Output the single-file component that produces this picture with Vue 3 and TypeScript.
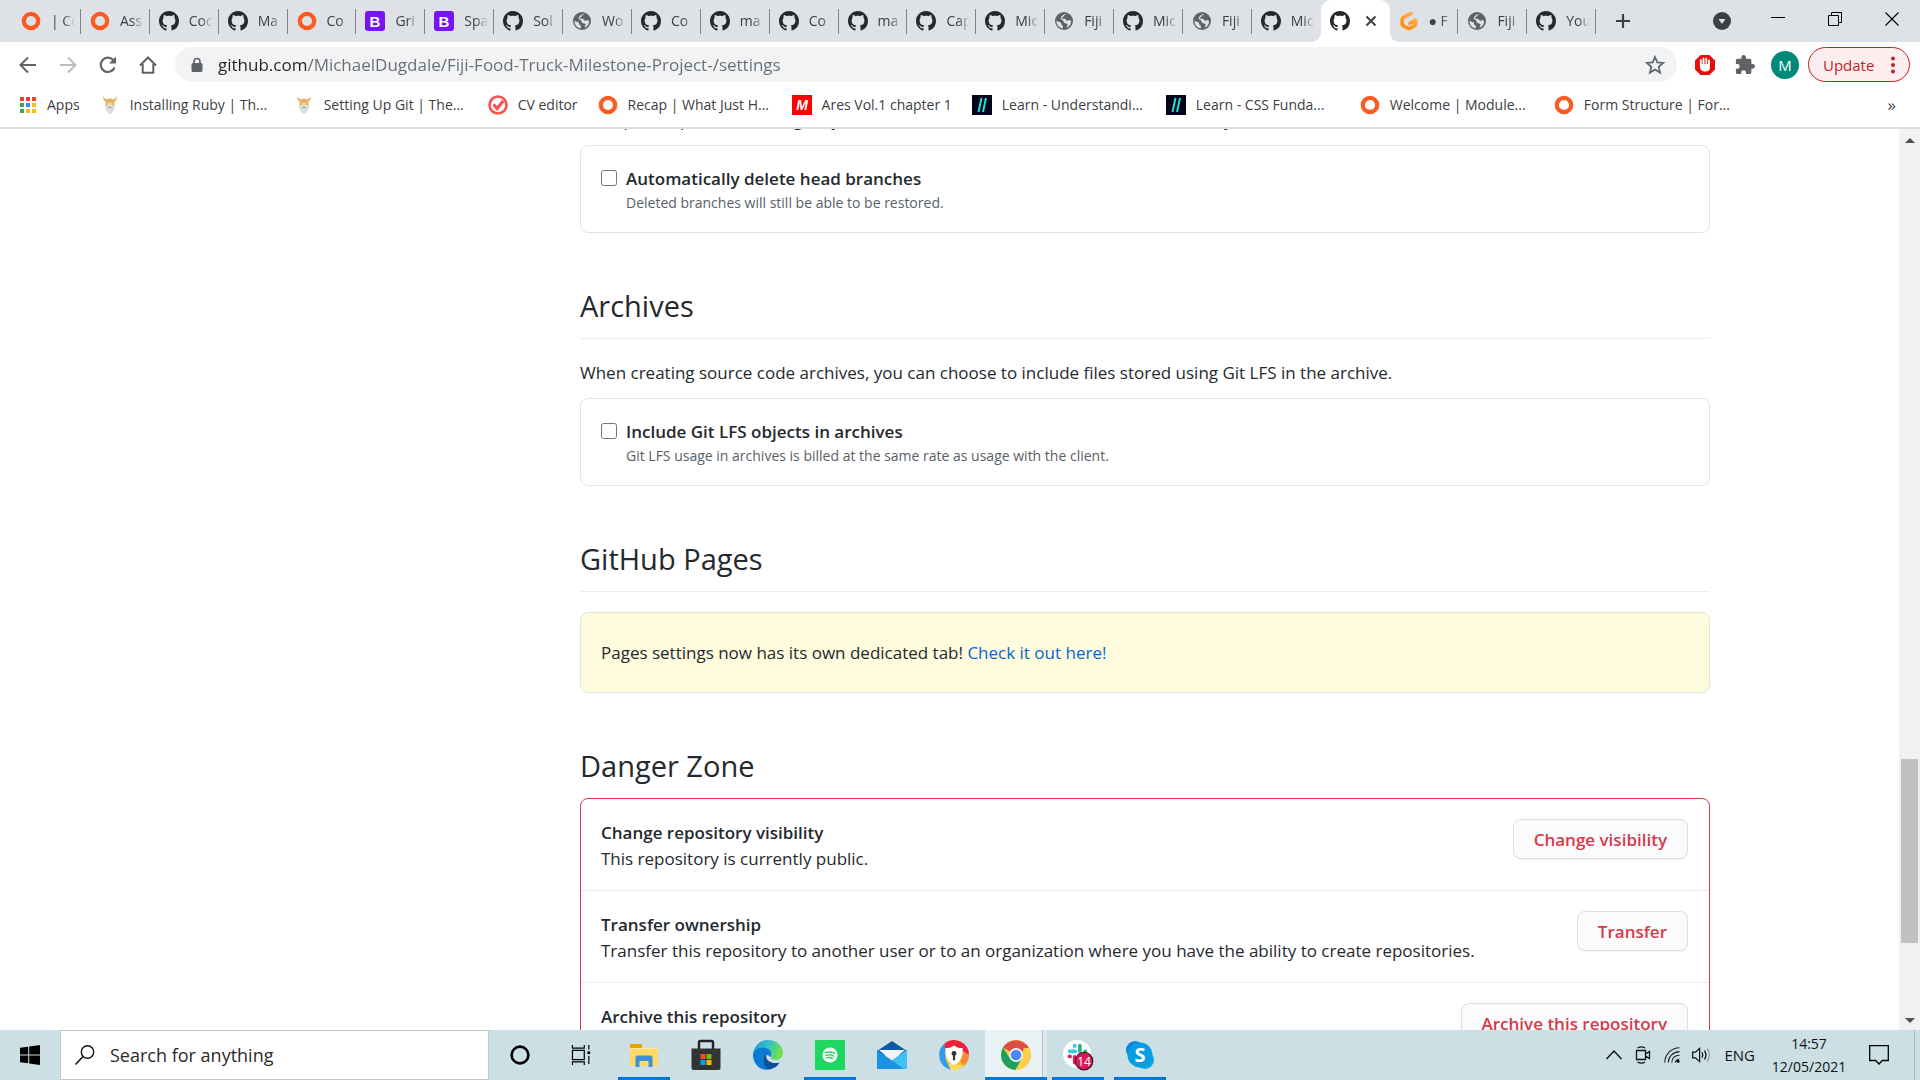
<script setup lang="ts">
interface Glyph { box: string; body: string }
interface Tab { icon: string; title: string; active?: boolean; divider: boolean }
interface Bookmark { icon: string; label: string; cut?: boolean }
interface TaskApp { icon: string; name: string; state?: 'open' | 'active' }
interface DangerItem { title: string; text: string; action: string }

const octocat = 'M8 0C3.58 0 0 3.58 0 8c0 3.54 2.29 6.53 5.47 7.59.4.07.55-.17.55-.38 0-.19-.01-.82-.01-1.49-2.01.37-2.53-.49-2.69-.94-.09-.23-.48-.94-.82-1.13-.28-.15-.68-.52-.01-.53.63-.01 1.08.58 1.23.82.72 1.21 1.87.87 2.33.66.07-.52.28-.87.51-1.07-1.78-.2-3.64-.89-3.64-3.95 0-.87.31-1.59.82-2.15-.08-.2-.36-1.02.08-2.12 0 0 .67-.21 2.2.82.64-.18 1.32-.27 2-.27.68 0 1.36.09 2 .27 1.53-1.04 2.2-.82 2.2-.82.44 1.1.16 1.92.08 2.12.51.56.82 1.27.82 2.15 0 3.07-1.87 3.75-3.65 3.95.29.25.54.73.54 1.48 0 1.07-.01 1.93-.01 2.2 0 .21.15.46.55.38A8.013 8.013 0 0016 8c0-4.42-3.58-8-8-8z'

const glyphs: Record<string, Glyph> = {
  ring: { box: '0 0 20 20', body: '<circle cx="10" cy="10" r="7.2" fill="none" stroke="#fb5a20" stroke-width="4.2"/>' },
  github: { box: '0 0 16 16', body: `<path fill="#24292e" d="${octocat}"/>` },
  bootstrap: { box: '0 0 20 20', body: '<rect width="20" height="20" rx="3" fill="#7613f7"/><text x="10" y="15.5" text-anchor="middle" font-family="Liberation Sans, sans-serif" font-weight="700" font-size="15" fill="#fff">B</text>' },
  globe: { box: '0 0 20 20', body: '<circle cx="10" cy="10" r="9" fill="#5f6368"/><path d="M2.6 9.5c1.2 1.6 3.1.9 4 2.1.8 1 .2 2.300 1.600 2.700 1 .4.6 1.700.8 2.900-4.200-.2-6.800-3.600-6.400-7.700zM12.300 2.900c-.5.9-2.300.8-2.400 2.100-.1 1.100-1.800.8-1.900 1.900 0 1 1.200 1 2.300.9 1.500-.1 1.300 1.600 2.600 1.800 1.400.2 1.600-.7 3-.4l1.200.8c.1 3.600-2 5.800-4.300 6.800-.2-1.300.9-2 .8-3.200-.2-1.400-2.600-.8-3.600-2.100-.8-1.200-.4-2.400-1.900-2.800-1.400-.3-1.700-1.500-1-2.700.8-1.700 3-3.200 5.200-3.100z" fill="#dee1e6"/>' },
  gitpod: { box: '0 0 20 20', body: '<defs><linearGradient id="gp" x1="0" y1="1" x2="1" y2="0"><stop offset="0" stop-color="#ff8a00"/><stop offset="1" stop-color="#ffb45b"/></linearGradient></defs><path d="M12.300 2.300 4.300 6.500a2 2 0 0 0-1.100 1.800v4.600a2 2 0 0 0 1.100 1.800l4.800 2.600a2 2 0 0 0 1.900 0l4.700-2.600a2 2 0 0 0 1.100-1.800V9.200l-6 3.300" fill="none" stroke="url(#gp)" stroke-width="3.600" stroke-linecap="round" stroke-linejoin="round"/>' },
  apps: { box: '0 0 18 18', body: '<path fill="#ea4335" d="M1 1h4v4H1zM7 1h4v4H7zM13 1h4v4h-4z"/><path fill="#34a853" d="M1 7h4v4H1zM1 13h4v4H1z"/><path fill="#4285f4" d="M7 7h4v4H7z"/><path fill="#fbbc05" d="M13 7h4v4h-4zM7 13h4v4H7zM13 13h4v4h-4z"/>' },
  viking: { box: '0 0 20 20', body: '<path d="M3 1c0 3 1 5 3 6h8c2-1 3-3 3-6-1 2-2 3-4 3.500C11.500 3 8.500 3 7 4.500 5 4 4 3 3 1z" fill="#e0b060"/><path d="M5.500 6h9v6h-9z" fill="#e6b765"/><path d="M8 8h4v3H8z" fill="#f6d7b0"/><path d="M5 9c1 2 3 1 5 1s4 1 5-1c.5 5-2 8-5 10.500C7 17 4.500 14 5 9z" fill="#dcdcdc"/><path d="M7.500 12.500c2-1 3-1 5 0-2 .8-3 .8-5 0z" fill="#a8a8a8"/>' },
  check: { box: '0 0 20 20', body: '<circle cx="10" cy="10" r="8.500" fill="none" stroke="#f9524f" stroke-width="2.600"/><path d="M5.500 9.500l3.700 4 6-7.500" fill="none" stroke="#f9524f" stroke-width="3.200"/>' },
  ares: { box: '0 0 20 20', body: '<path fill="#f00" d="M0 0h20v20H0z"/><text x="10" y="15" text-anchor="middle" font-family="Liberation Sans, sans-serif" font-style="italic" font-weight="700" font-size="14" fill="#fff">M</text>' },
  slashes: { box: '0 0 20 20', body: '<path fill="#04041a" d="M0 0h20v20H0z"/><path d="M6.500 17 9.500 3M11 17l3-14" stroke="#17e5d2" stroke-width="2"/>' },
  back: { box: '0 0 20 20', body: '<path d="M18 10H3M10 2.500 2.500 10l7.500 7.500" fill="none" stroke="#5f6368" stroke-width="2"/>' },
  forward: { box: '0 0 20 20', body: '<path d="M2 10h15M10 2.500 17.500 10 10 17.500" fill="none" stroke="#babcbe" stroke-width="2"/>' },
  reload: { box: '0 0 20 20', body: '<path d="M16.600 12.500A7.200 7.200 0 1 1 15.300 5" fill="none" stroke="#5f6368" stroke-width="2.100"/><path d="M18 1.500V8.500H11z" fill="#5f6368"/>' },
  home: { box: '0 0 20 20', body: '<path d="M2 10.500 10 2.500l8 8M4.700 9v8.700h10.600V9" fill="none" stroke="#5f6368" stroke-width="2"/>' },
  lock: { box: '0 0 14 16', body: '<rect x="1.500" y="6" width="11" height="9" rx="1.500" fill="#5f6368"/><path d="M4 7V4.500a3 3 0 0 1 6 0V7" fill="none" stroke="#5f6368" stroke-width="1.600"/>' },
  star: { box: '0 0 20 20', body: '<path d="m10 2 2.300 5.400 5.900.5-4.500 3.900 1.400 5.800L10 14.500l-5.100 3.100 1.400-5.800L1.800 7.900l5.900-.5z" fill="none" stroke="#5f6368" stroke-width="1.700"/>' },
  blocker: { box: '0 0 22 22', body: '<path d="M6.600 1h8.800L21 6.600v8.800L15.400 21H6.600L1 15.400V6.600z" fill="#ec0b0b"/><path d="M6.800 11.500V6.200M9.500 10.500V4.500M12.300 10.500V4.800M15 12V6.500" stroke="#fff" stroke-width="1.900" stroke-linecap="round"/><path d="M6 10h10v3.500c0 2.500-1.600 4-4.500 4S6 16 6 13.500z" fill="#fff"/>' },
  puzzle: { box: '1 1 22 22', body: '<path fill="#5f6368" d="M20.500 11H19V7c0-1.100-.9-2-2-2h-4V3.500a2.500 2.500 0 0 0-5 0V5H4c-1.100 0-2 .9-2 2v3.800h1.500a2.700 2.700 0 0 1 0 5.400H2V20c0 1.100.9 2 2 2h3.800v-1.500a2.700 2.700 0 0 1 5.400 0V22H17c1.100 0 2-.9 2-2v-4h1.500a2.500 2.500 0 0 0 0-5z"/>' },
  kebab: { box: '0 0 4 18', body: '<circle cx="2" cy="2.500" r="2" fill="#c5221f"/><circle cx="2" cy="9" r="2" fill="#c5221f"/><circle cx="2" cy="15.500" r="2" fill="#c5221f"/>' },
  close: { box: '0 0 12 12', body: '<path d="m1.500 1.500 9 9m0-9-9 9" stroke="#3c4043" stroke-width="2"/>' },
  plus: { box: '0 0 16 16', body: '<path d="M8 1v14M1 8h14" stroke="#3c4043" stroke-width="2.200"/>' },
  chevrondisc: { box: '0 0 18 18', body: '<circle cx="9" cy="9" r="9" fill="#3c4043"/><path d="M5.500 7h7L9 12z" fill="#dee1e6"/>' },
  minimise: { box: '0 0 14 14', body: '<path d="M0 5.500h14" stroke="#000"/>' },
  restore: { box: '0 0 14 14', body: '<path d="M.5 3.500h10v10H.5zM3.500 3.500v-3h10v10h-3" fill="none" stroke="#000"/>' },
  exit: { box: '0 0 14 14', body: '<path d="m.5.5 13 13m0-13-13 13" stroke="#000" stroke-width="1.100"/>' },
  windows: { box: '0 0 20 20', body: '<path d="M0 2.800 8.200 1.700v7.800H0zM9.200 1.500 20 0v9.500H9.200zM0 10.500h8.200v7.800L0 17.200zM9.200 10.500H20V20L9.200 18.500z"/>' },
  magnifier: { box: '0 0 20 20', body: '<circle cx="12.500" cy="7" r="6.200" fill="none" stroke="#111" stroke-width="1.400"/><path d="M8 11.500.5 19.500" stroke="#111" stroke-width="1.500"/>' },
  cortana: { box: '0 0 20 20', body: '<circle cx="10" cy="10" r="8.400" fill="none" stroke="#000" stroke-width="2.600"/>' },
  taskview: { box: '1 0 20 22', body: '<path d="M.5 0v3.500h13V0M.5 22v-3.500h13V22M.5 6h13v10H.5zM18.500 0v5M18.500 12v9" fill="none" stroke="#000" stroke-width="1.300"/><path d="M17 7h3v3h-3z"/>' },
  explorer: { box: '0 0 30 30', body: '<path d="M1 4.500h11.500l1.500 3H29V26H1z" fill="#ffd867"/><path d="M1 4h12v4H1z" fill="#e2a30a"/><path d="M1 8h28v1H1z" fill="#ffe9a3"/><path d="M6.500 27V17.500a2 2 0 0 1 2-2h13a2 2 0 0 1 2 2V27h-4v-6h-9v6z" fill="#3b91d8"/>' },
  store: { box: '0 0 30 30', body: '<path d="M8 10V2.500a1.500 1.500 0 0 1 1.500-1.500h11a1.500 1.500 0 0 1 1.500 1.500V10" fill="none" stroke="#222" stroke-width="2.400"/><path d="M.5 8.500h29V28a2 2 0 0 1-2 2h-25a2 2 0 0 1-2-2z" fill="#333"/><path d="M9.500 14h5v5h-5z" fill="#f25022"/><path d="M15.500 14h5v5h-5z" fill="#7fba00"/><path d="M9.500 20h5v5h-5z" fill="#00a4ef"/><path d="M15.500 20h5v5h-5z" fill="#ffb900"/>' },
  edge: { box: '0 0 30 30', body: '<defs><linearGradient id="eg" x1="0" x2="1" y2=".3"><stop offset="0" stop-color="#1b9de2"/><stop offset=".55" stop-color="#35c1c6"/><stop offset="1" stop-color="#6fe04b"/></linearGradient></defs><path d="M0 14C1 5.500 7.500 0 15 0c9 0 15 6 15 13 0 4.500-3.500 7-7.500 7-3.500 0-5-1.200-4.500-2.300 2-2.700.5-7.700-5-7.700C7 10 1.500 11 0 14z" fill="url(#eg)"/><path d="M0 14c1-3.500 5-7 10.500-6.500 4.500.3 8 3.500 8 6.500 0 1.500-.5 2.500-1 3.300C15 13.500 11 14.500 10.500 18c-.3 4 3 8.500 8 9.500-2 1.500-4.500 2.500-6 2.300C5 29-.5 22 0 14z" fill="#0a7bd3"/><path d="M10.500 18c.3-2 1.500-3.500 3-4.300-2 6 4.500 11 13 8.800-1.500 3-5 6.500-11 7-3-1.500-5.500-7-5-11.500z" fill="#0c4f9e"/>' },
  spotify: { box: '0 0 30 30', body: '<path fill="#1ed760" d="M0 0h30v30H0z"/><circle cx="15" cy="15" r="7.600" fill="#fff"/><path d="M10.500 12.500c3.500-1 6.500-.7 9.300.8M11 15.300c2.800-.8 5.500-.5 7.800.8M11.500 17.900c2.300-.6 4.400-.4 6.200.7" fill="none" stroke="#1ed760" stroke-width="1.400" stroke-linecap="round"/>' },
  mail: { box: '0 0 30 30', body: '<path d="M0 11 15 1l15 10v4H0z" fill="#0c59a4"/><path d="M2 10h26L15 21z" fill="#f4f4f6"/><path d="M0 10l15 10.500L30 10v19H0z" fill="#1b93e2"/><path d="M30 10 15 20.500 27 29h3z" fill="#3cc3f3"/>' },
  vault: { box: '0 0 28 28', body: '<circle cx="14" cy="14" r="14" fill="#f6c23b"/><path d="M5 3.500A14 14 0 0 1 28 14l-5-3L14 5 5 11z" fill="#ee1f44"/><path d="M5 3.500A14 14 0 0 0 11 27.700L6 18V10z" fill="#2b9df4"/><path d="M11 27.700A14 14 0 0 0 23 24l-9-1-5-1z" fill="#ffd95a"/><path d="M28 14a14 14 0 0 1-5 10l-3-4 3-9z" fill="#f58a3a"/><path d="M14 5.500c2.500 1.500 5 2 8 2C22.500 15 20 21 14 23.500 8 21 5.500 15 6 7.500c3 0 5.500-.5 8-2z" fill="#fff"/><circle cx="14" cy="12.500" r="2.300" fill="#333"/><path d="M13 13h2v6h-2z" fill="#333"/>' },
  chrome: { box: '0 0 28 28', body: '<circle cx="14" cy="14" r="14" fill="#fbc546"/><path d="M14 14 1.900 7A14 14 0 0 1 26.100 7.500z" fill="#dd4f43"/><path d="M1.900 7A14 14 0 0 0 13.500 28l6-11L14 14 7.500 16z" fill="#1ea15c"/><path d="M26.100 7.500A14 14 0 0 1 13.500 28L20 17l1-9.500z" fill="#fdcf4b"/><circle cx="14" cy="14" r="6.500" fill="#f4f4f4"/><circle cx="14" cy="14" r="5" fill="#4a8af4"/>' },
  slack: { box: '0 0 32 32', body: '<circle cx="15" cy="15" r="15" fill="#fff"/><g stroke-width="4" stroke-linecap="round"><path d="M7 12h6M12.500 6v.5" stroke="#36c5f0"/><path d="M18 6v6M23.500 12h.5" stroke="#2eb67d"/><path d="M12.500 18v6M7 17.500h.5" stroke="#e01e5a"/><path d="M18 18h6" stroke="#ecb22e"/></g><circle cx="22.500" cy="22.500" r="9.300" fill="#d81b57" stroke="#4a1022" stroke-width="1.200"/><text x="22.500" y="27.500" text-anchor="middle" font-family="Open Sans, sans-serif" font-size="13" fill="#fff">14</text>' },
  skype: { box: '0 0 30 30', body: '<circle cx="10" cy="10" r="9" fill="#0a86d4"/><circle cx="20" cy="20" r="9" fill="#0aa5ec"/><circle cx="15" cy="15" r="12.500" fill="#069ee3"/><text x="15" y="22" text-anchor="middle" font-family="Open Sans, sans-serif" font-weight="700" font-size="20" fill="#fff">S</text>' },
  caret: { box: '0 0 16 16', body: '<path d="m.5 12 7.500-8 7.500 8" fill="none" stroke="#111" stroke-width="1.400"/>' },
  meet: { box: '0 0 16 18', body: '<path d="M1.500 4.500h9v9h-9zM10.500 8l4-2.500v7l-4-2.500M2.500 2C5 .6 8 .6 10 2M2.500 16c2.500 1.400 5.500 1.400 7.500 0" fill="none" stroke="#111" stroke-width="1.300"/>' },
  wifi: { box: '0 0 16 16', body: '<path d="M.7 15.500C1 7.500 7 1 15.500.8M4.200 15.500C4.500 9.500 9 5 15.500 4.600M7.800 15.500c.3-4 3-7 7.700-7.200M11.300 15.500c.2-2 1.700-3.300 4.200-3.500" fill="none" stroke="#222" stroke-width="1.100"/><circle cx="14" cy="14.300" r="1.500"/>' },
  sound: { box: '0 0 21 18', body: '<path d="M.7 6h3L8 2v14l-4.300-4h-3zM10.500 6.300c1 1.600 1 3.800 0 5.400M13 4.300c2 2.800 2 6.600 0 9.400" fill="none" stroke="#111" stroke-width="1.300"/><path d="M16 2.300c3 4 3 9.400 0 13.400" fill="none" stroke="#7d8c91" stroke-width="1.200"/>' },
  note: { box: '0 0 20 20', body: '<path d="M.7.7h18.600v14.800h-6L10 19l-3.300-3.500h-6z" fill="none" stroke="#000" stroke-width="1.300"/>' },
}

const rawTabs: [string, string][] = [
  ['ring', '| Co'], ['ring', 'Ass'], ['github', 'Coc'], ['github', 'Ma'], ['ring', 'Co'],
  ['bootstrap', 'Gri'], ['bootstrap', 'Spa'], ['github', 'Sol'], ['globe', 'Wo'], ['github', 'Co'],
  ['github', 'ma'], ['github', 'Co'], ['github', 'ma'], ['github', 'Cap'], ['github', 'Mic'],
  ['globe', 'Fiji'], ['github', 'Mic'], ['globe', 'Fiji'], ['github', 'Mic'], ['github', ''],
  ['gitpod', '● F'], ['globe', 'Fiji'], ['github', 'You'],
]
const activeIndex = 19
const tabs: Tab[] = rawTabs.map(([icon, title], i) => ({
  icon, title, active: i === activeIndex, divider: i !== activeIndex && i !== activeIndex - 1,
}))

const bookmarks: Bookmark[] = [
  { icon: 'viking', label: 'Installing Ruby | Th...', cut: true },
  { icon: 'viking', label: 'Setting Up Git | The...', cut: true },
  { icon: 'check', label: 'CV editor' },
  { icon: 'ring', label: 'Recap | What Just H...', cut: true },
  { icon: 'ares', label: 'Ares Vol.1 chapter 1' },
  { icon: 'slashes', label: 'Learn - Understandi...', cut: true },
  { icon: 'slashes', label: 'Learn - CSS Funda...', cut: true },
  { icon: 'ring', label: 'Welcome | Module...', cut: true },
  { icon: 'ring', label: 'Form Structure | For...', cut: true },
]

const taskApps: TaskApp[] = [
  { icon: 'explorer', name: 'File Explorer', state: 'open' },
  { icon: 'store', name: 'Microsoft Store' },
  { icon: 'edge', name: 'Edge' },
  { icon: 'spotify', name: 'Spotify', state: 'open' },
  { icon: 'mail', name: 'Mail' },
  { icon: 'vault', name: 'Secure Browser' },
  { icon: 'chrome', name: 'Chrome', state: 'active' },
  { icon: 'slack', name: 'Slack', state: 'open' },
  { icon: 'skype', name: 'Skype', state: 'open' },
]

const dangerItems: DangerItem[] = [
  { title: 'Change repository visibility', text: 'This repository is currently public.', action: 'Change visibility' },
  { title: 'Transfer ownership', text: 'Transfer this repository to another user or to an organization where you have the ability to create repositories.', action: 'Transfer' },
  { title: 'Archive this repository', text: 'Mark this repository as archived and read-only.', action: 'Archive this repository' },
]
</script>

<template>
  <div class="desktop">
    <header class="tabstrip">
      <nav class="tabs" aria-label="Open tabs">
        <div v-for="(tab, i) in tabs" :key="i" class="tab" :class="{ active: tab.active, divider: tab.divider }">
          <svg class="i20" :viewBox="glyphs[tab.icon].box" v-html="glyphs[tab.icon].body"></svg>
          <button v-if="tab.active" class="plain" aria-label="Close tab">
            <svg class="i12" :viewBox="glyphs.close.box" v-html="glyphs.close.body"></svg>
          </button>
          <span v-else class="tab-title">{{ tab.title }}</span>
        </div>
      </nav>
      <div class="window-tools">
        <button class="plain tool" aria-label="New tab"><svg class="i16" :viewBox="glyphs.plus.box" v-html="glyphs.plus.body"></svg></button>
        <span class="grow"></span>
        <button class="plain tool" aria-label="Search tabs"><svg class="i18" :viewBox="glyphs.chevrondisc.box" v-html="glyphs.chevrondisc.body"></svg></button>
        <button v-for="name in ['minimise', 'restore', 'exit']" :key="name" class="plain caption" :aria-label="name">
          <svg class="i14" :viewBox="glyphs[name].box" v-html="glyphs[name].body"></svg>
        </button>
      </div>
    </header>

    <div class="toolbar">
      <button v-for="name in ['back', 'forward', 'reload', 'home']" :key="name" class="plain nav" :aria-label="name">
        <svg class="i20" :viewBox="glyphs[name].box" v-html="glyphs[name].body"></svg>
      </button>
      <div class="omnibox">
        <svg class="lock" :viewBox="glyphs.lock.box" v-html="glyphs.lock.body"></svg>
        <input class="url" type="text" aria-label="Address" value="github.com/MichaelDugdale/Fiji-Food-Truck-Milestone-Project-/settings">
        <button class="plain" aria-label="Bookmark this page"><svg class="i20" :viewBox="glyphs.star.box" v-html="glyphs.star.body"></svg></button>
      </div>
      <button class="plain nav" aria-label="Ad blocker"><svg class="i22" :viewBox="glyphs.blocker.box" v-html="glyphs.blocker.body"></svg></button>
      <button class="plain nav" aria-label="Extensions"><svg class="i20" :viewBox="glyphs.puzzle.box" v-html="glyphs.puzzle.body"></svg></button>
      <button class="plain nav"><span class="avatar">M</span></button>
      <button class="update">Update <svg class="kebab" :viewBox="glyphs.kebab.box" v-html="glyphs.kebab.body"></svg></button>
    </div>

    <nav class="bookmarks" aria-label="Bookmarks">
      <a href="#" class="bookmark"><svg class="i18" :viewBox="glyphs.apps.box" v-html="glyphs.apps.body"></svg>Apps</a>
      <a v-for="mark in bookmarks" :key="mark.label" href="#" class="bookmark" :class="{ cut: mark.cut }">
        <svg class="i20" :viewBox="glyphs[mark.icon].box" v-html="glyphs[mark.icon].body"></svg>{{ mark.label }}
      </a>
      <span class="grow"></span>
      <button class="plain more" aria-label="More bookmarks">»</button>
    </nav>

    <div class="viewport">
      <div class="page">
        <div class="container">
          <main class="settings">
            <p class="intro">After pull requests are merged, you can have head branches deleted automatically.</p>
            <div class="card">
              <input id="delete-branches" type="checkbox">
              <div>
                <label for="delete-branches">Automatically delete head branches</label>
                <p class="hint">Deleted branches will still be able to be restored.</p>
              </div>
            </div>

            <h2>Archives</h2>
            <p class="intro">When creating source code archives, you can choose to include files stored using Git LFS in the archive.</p>
            <div class="card">
              <input id="include-lfs" type="checkbox">
              <div>
                <label for="include-lfs">Include Git LFS objects in archives</label>
                <p class="hint">Git LFS usage in archives is billed at the same rate as usage with the client.</p>
              </div>
            </div>

            <h2>GitHub Pages</h2>
            <p class="flash">Pages settings now has its own dedicated tab! <a href="#">Check it out here!</a></p>

            <h2 class="danger-heading">Danger Zone</h2>
            <ul class="danger">
              <li v-for="item in dangerItems" :key="item.title">
                <div class="danger-text">
                  <strong>{{ item.title }}</strong>
                  <p>{{ item.text }}</p>
                </div>
                <button class="danger-button">{{ item.action }}</button>
              </li>
            </ul>
          </main>
        </div>
      </div>
      <div class="scrollbar" aria-hidden="true">
        <span class="arrow up"></span>
        <span class="track-above"></span>
        <span class="thumb"></span>
        <span class="track-below"></span>
        <span class="arrow down"></span>
      </div>
    </div>

    <footer class="taskbar">
      <button class="plain start" aria-label="Start"><svg class="i20" :viewBox="glyphs.windows.box" v-html="glyphs.windows.body"></svg></button>
      <label class="search">
        <svg class="i20" :viewBox="glyphs.magnifier.box" v-html="glyphs.magnifier.body"></svg>
        <input type="text" placeholder="Search for anything" aria-label="Search for anything">
      </label>
      <button v-for="name in ['cortana', 'taskview']" :key="name" class="plain task" :aria-label="name">
        <svg class="i20" :viewBox="glyphs[name].box" v-html="glyphs[name].body"></svg>
      </button>
      <button v-for="app in taskApps" :key="app.name" class="plain task" :class="app.state" :aria-label="app.name">
        <svg class="i30" :viewBox="glyphs[app.icon].box" v-html="glyphs[app.icon].body"></svg>
      </button>
      <span class="grow"></span>
      <div class="tray">
        <svg class="i16" :viewBox="glyphs.caret.box" v-html="glyphs.caret.body"></svg>
        <svg class="i18" :viewBox="glyphs.meet.box" v-html="glyphs.meet.body"></svg>
        <svg class="i16" :viewBox="glyphs.wifi.box" v-html="glyphs.wifi.body"></svg>
        <svg class="i20" :viewBox="glyphs.sound.box" v-html="glyphs.sound.body"></svg>
        <span>ENG</span>
      </div>
      <time class="clock" datetime="2021-05-12T14:57"><span>14:57</span><span>12/05/2021</span></time>
      <button class="plain notes" aria-label="Notifications"><svg class="i20" :viewBox="glyphs.note.box" v-html="glyphs.note.body"></svg></button>
    </footer>
  </div>
</template>

<style>
body {
  margin: 0;
}
</style>

<style scoped>
* {
  box-sizing: border-box;
}

.desktop {
  display: flex;
  flex-direction: column;
  height: 100vh;
  overflow: hidden;
  background: #fff;
  color: #24292e;
  font: 17px/26px "Open Sans", "Noto Sans", sans-serif;
}

p, h2, ul {
  margin: 0;
  padding: 0;
}

svg {
  display: block;
  flex: none;
  overflow: visible;
}

.i12 { width: 12px; height: 12px; }
.i14 { width: 14px; height: 14px; }
.i16 { width: 16px; height: 16px; }
.i18 { width: 18px; height: 18px; }
.i20 { width: 20px; height: 20px; }
.i22 { width: 22px; height: 22px; }
.i30 { width: 30px; height: 30px; }

.grow {
  flex: 1;
}

.plain {
  display: flex;
  align-items: center;
  justify-content: center;
  padding: 0;
  border: 0;
  background: none;
  color: inherit;
  font: inherit;
}

/* Tab strip */
.tabstrip {
  display: flex;
  flex: none;
  height: 42px;
  background: #dee1e6;
}

.tabs {
  display: flex;
  flex: 1;
  min-width: 0;
  padding-left: 12px;
}

.tab {
  display: flex;
  flex: 1 1 0;
  align-items: center;
  gap: 10px;
  min-width: 0;
  padding-left: 9px;
  color: #3c4043;
  font-size: 14px;
  position: relative;
}

.tab.divider::after {
  content: "";
  position: absolute;
  right: 0;
  top: 9px;
  width: 1px;
  height: 25px;
  background: #808388;
}

.tab.active {
  gap: 15px;
  border-radius: 10px 10px 0 0;
  background: #fff;
}

.tab.active::before,
.tab.active::after {
  content: "";
  position: absolute;
  bottom: 0;
  width: 10px;
  height: 10px;
}

.tab.active::before {
  right: 100%;
  background: radial-gradient(circle at 0 0, transparent 10px, #fff 10px);
}

.tab.active::after {
  left: 100%;
  background: radial-gradient(circle at 100% 0, transparent 10px, #fff 10px);
}

.tab-title {
  width: 24px;
  overflow: hidden;
  white-space: nowrap;
  mask-image: linear-gradient(90deg, #000 12px, transparent 24px);
}

.window-tools {
  display: flex;
  flex: none;
  width: 324px;
}

.tool {
  width: 54px;
}

.caption {
  width: 57px;
  height: 38px;
}

/* Toolbar */
.toolbar {
  display: flex;
  flex: none;
  align-items: center;
  height: 45px;
  padding: 0 10px 0 8px;
}

.nav {
  width: 40px;
  height: 40px;
}

.omnibox {
  display: flex;
  flex: 1;
  align-items: center;
  gap: 14px;
  height: 35px;
  margin: 0 8px 0 7px;
  padding: 0 12px 0 15px;
  border-radius: 18px;
  background: #f1f3f4;
}

.lock {
  width: 14px;
  height: 16px;
}

.url {
  flex: 1;
  min-width: 0;
  padding: 0;
  border: 0;
  background: linear-gradient(90deg, #202124 89px, #696d71 89px);
  background-clip: text;
  color: transparent;
  font: inherit;
}

.avatar {
  width: 28px;
  height: 28px;
  border-radius: 50%;
  background: #00897b;
  color: #fff;
  font-size: 15px;
  line-height: 28px;
}

.update {
  display: flex;
  align-items: center;
  justify-content: space-between;
  width: 102px;
  height: 35px;
  margin-left: 3px;
  padding: 0 14px;
  border: 1px solid #c5221f;
  border-radius: 18px;
  background: #fceeee;
  color: #c5221f;
  font: 15px/20px "Open Sans", sans-serif;
}

.kebab {
  width: 4px;
  height: 18px;
}

/* Bookmarks */
.bookmarks {
  display: flex;
  flex: none;
  align-items: center;
  gap: 20px;
  height: 42px;
  padding: 0 24px 4px 19px;
  border-bottom: 2px solid #dadce0;
  font-size: 14px;
}

.bookmark {
  display: flex;
  align-items: center;
  gap: 10px;
  color: #3c4043;
  text-decoration: none;
  white-space: nowrap;
}

.bookmark.cut {
  width: 174px;
}

.more {
  color: #3c4043;
  font-size: 17px;
}

/* Page */
.viewport {
  display: flex;
  flex: 1;
  min-height: 0;
}

.page {
  flex: 1;
  min-width: 0;
  overflow: hidden;
}

.container {
  display: flex;
  justify-content: flex-end;
  max-width: 1521px;
  margin: -23px auto 0;
}

.settings {
  width: 1130px;
}

.intro {
  padding-top: 1px;
  margin-bottom: 12px;
}

.card {
  display: flex;
  gap: 9px;
  padding: 20px 20px 18px;
  border: 1px solid #e1e4e8;
  border-radius: 8px;
}

.card input {
  width: 16px;
  height: 16px;
  margin: 4px 0 0;
}

.card label {
  display: block;
  font-weight: 600;
}

.hint {
  color: #586069;
  font-size: 14px;
  line-height: 22px;
}

h2 {
  margin: 50px 0 20px;
  padding-bottom: 10px;
  border-bottom: 1px solid #eaecef;
  font-size: 29px;
  font-weight: 400;
  line-height: 45px;
}

.flash {
  padding: 27px 20px 26px;
  border: 1px solid #e1e4d8;
  border-radius: 8px;
  background: #fffbdd;
}

.flash a {
  color: #0366d6;
  text-decoration: none;
}

.danger-heading {
  margin-bottom: 0;
  border: 0;
}

.danger {
  border: 1px solid #d73a49;
  border-radius: 8px;
  list-style: none;
}

.danger li {
  display: flex;
  align-items: flex-start;
  justify-content: space-between;
  padding: 20px 21px 18px 20px;
}

.danger li + li {
  border-top: 1px solid #eaecef;
}

.danger-text {
  padding-top: 1px;
}

.danger strong {
  font-weight: 600;
}

.danger-button {
  height: 40px;
  padding: 2px 20px 0;
  border: 1px solid #dcdfe2;
  border-radius: 8px;
  background: #fafbfc;
  box-shadow: 0 1px 0 rgba(27, 31, 35, 0.04);
  color: #d73a49;
  font: 600 17px/26px "Open Sans", "Noto Sans", sans-serif;
}

.scrollbar {
  display: flex;
  flex: none;
  flex-direction: column;
  align-items: center;
  width: 21px;
  padding: 9px 0 7px;
  background: #f1f1f1;
}

.arrow {
  border: 5px solid transparent;
}

.arrow.up {
  border-top: 0;
  border-bottom-color: #505050;
}

.arrow.down {
  border-bottom: 0;
  border-top-color: #505050;
}

.track-above {
  flex: 616;
}

.thumb {
  flex: 184;
  width: 17px;
  background: #c1c1c1;
}

.track-below {
  flex: 75;
}

/* Taskbar */
.taskbar {
  display: flex;
  flex: none;
  height: 50px;
  background: #cbdfe5;
  color: #111;
}

.start {
  width: 60px;
}

.search {
  display: flex;
  align-items: center;
  gap: 15px;
  width: 429px;
  padding-left: 14px;
  border: 1px solid #c3c8ca;
  background: #fff;
}

.search input {
  flex: 1;
  min-width: 0;
  padding: 0;
  border: 0;
  font: 18px/26px "Open Sans", "Noto Sans", sans-serif;
}

.search input::placeholder {
  color: #2b2b2b;
}

.task {
  width: 62px;
  position: relative;
}

.task.open::after,
.task.active::after {
  content: "";
  position: absolute;
  right: 5px;
  bottom: 0;
  left: 5px;
  height: 3px;
  background: #0078d7;
}

.task.active {
  background: linear-gradient(90deg, #e8f1f3 57px, #aec3ca 57px, #aec3ca 58px, #dbe9ed 58px);
}

.task.active::after {
  right: 0;
  left: 0;
}

.tray {
  display: flex;
  align-items: center;
  gap: 12px;
  font-size: 15px;
}

.clock {
  display: flex;
  flex-direction: column;
  justify-content: center;
  width: 108px;
  font-size: 14px;
  line-height: 23px;
  text-align: center;
}

.notes {
  width: 52px;
  margin-right: 5px;
  padding-right: 20px;
  border-right: 1px solid #a5b8be;
}
</style>
